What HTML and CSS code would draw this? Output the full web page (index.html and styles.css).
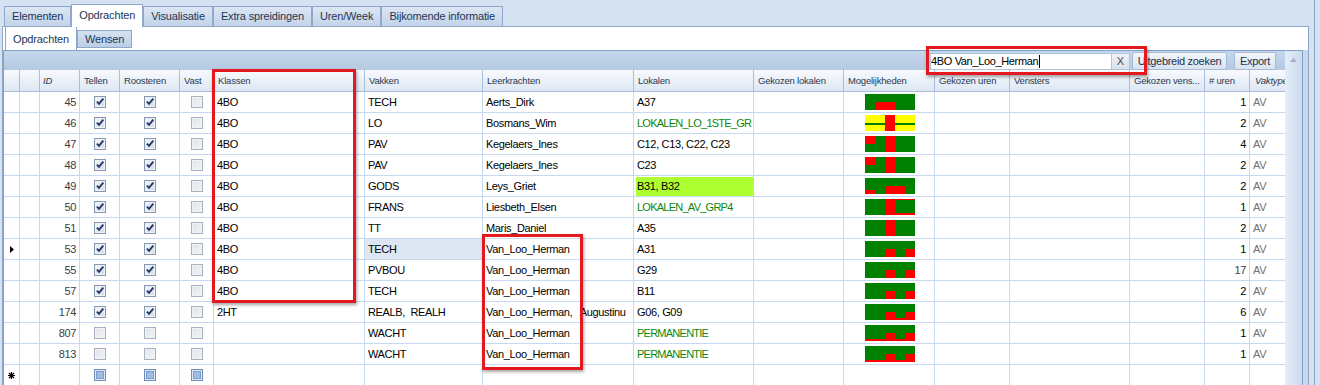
FILE: index.html
```html
<!DOCTYPE html>
<html>
<head>
<meta charset="utf-8">
<link rel="stylesheet" href="styles.css">
</head>
<body>
<svg class="defs" width="0" height="0" aria-hidden="true">
  <defs>
    <linearGradient id="gOn" x1="0" y1="0" x2="1" y2="1">
      <stop offset="0" stop-color="#f7f8fa"/><stop offset="1" stop-color="#d2d8e1"/>
    </linearGradient>
    <linearGradient id="gOff" x1="0" y1="0" x2="1" y2="1">
      <stop offset="0" stop-color="#dfe2e6"/><stop offset="1" stop-color="#f4f5f7"/>
    </linearGradient>
    <symbol id="cbOn" viewBox="0 0 12 12">
      <rect x=".5" y=".5" width="11" height="11" fill="url(#gOn)" stroke="#8798b2"/>
      <rect x="1.5" y="1.5" width="9" height="9" fill="none" stroke="#eef1f5"/>
      <path d="M2.9 5.6L5 7.9L9.3 2.6" fill="none" stroke="#203a6c" stroke-width="1.9"/>
    </symbol>
    <symbol id="cbOff" viewBox="0 0 12 12">
      <rect x=".5" y=".5" width="11" height="11" fill="url(#gOff)" stroke="#a8b1bf"/>
      <rect x="1.5" y="1.5" width="9" height="9" fill="none" stroke="#f1f2f4"/>
    </symbol>
    <symbol id="cbNew" viewBox="0 0 12 12">
      <rect x=".5" y=".5" width="11" height="11" fill="#dfe8f5" stroke="#6f8db9"/>
      <rect x="2.5" y="2.5" width="7" height="7" fill="#9fbce3" stroke="#7c9ccb"/>
    </symbol>
  </defs>
</svg>

<div class="frame">
  <div class="tabs">
    <div class="tab">Elementen</div>
    <div class="tab on">Opdrachten</div>
    <div class="tab">Visualisatie</div>
    <div class="tab">Extra spreidingen</div>
    <div class="tab">Uren/Week</div>
    <div class="tab">Bijkomende informatie</div>
  </div>
  <div class="page">
    <div class="subtabs">
      <div class="subtab on">Opdrachten</div>
      <div class="subtab">Wensen</div>
    </div>
    <div class="grid">
      <div class="main">
        <div class="toolbar">
          <div class="search">4BO Van_Loo_Herman<span class="caret"></span></div>
          <div class="clear">X</div>
          <div class="btn btn-adv">Uitgebreid zoeken</div>
          <div class="btn btn-exp">Export</div>
        </div>

        <div class="row head">
          <div class="c"></div>
          <div class="c"></div>
          <div class="c it">ID</div>
          <div class="c">Tellen</div>
          <div class="c">Roosteren</div>
          <div class="c">Vast</div>
          <div class="c">Klassen</div>
          <div class="c">Vakken</div>
          <div class="c">Leerkrachten</div>
          <div class="c">Lokalen</div>
          <div class="c">Gekozen lokalen</div>
          <div class="c">Mogelijkheden</div>
          <div class="c">Gekozen uren</div>
          <div class="c">Vensters</div>
          <div class="c">Gekozen vens...</div>
          <div class="c"># uren</div>
          <div class="c it vt">Vaktype</div>
        </div>

        <div class="row">
          <div class="c ind"></div><div class="c"></div><div class="c num id">45</div>
          <div class="c ck"><svg class="cb"><use href="#cbOn"/></svg></div>
          <div class="c ck"><svg class="cb"><use href="#cbOn"/></svg></div>
          <div class="c ck"><svg class="cb"><use href="#cbOff"/></svg></div>
          <div class="c">4BO</div><div class="c">TECH</div><div class="c">Aerts_Dirk</div><div class="c">A37</div><div class="c"></div>
          <div class="c bar"><svg width="50" height="16"><rect width="50" height="16" fill="#008000"/><rect x="10" y="8" width="20" height="8" fill="#f00"/></svg></div>
          <div class="c"></div><div class="c"></div><div class="c"></div><div class="c num">1</div><div class="c av">AV</div>
        </div>

        <div class="row">
          <div class="c ind"></div><div class="c"></div><div class="c num id">46</div>
          <div class="c ck"><svg class="cb"><use href="#cbOn"/></svg></div>
          <div class="c ck"><svg class="cb"><use href="#cbOn"/></svg></div>
          <div class="c ck"><svg class="cb"><use href="#cbOff"/></svg></div>
          <div class="c">4BO</div><div class="c">LO</div><div class="c">Bosmans_Wim</div><div class="c grn">LOKALEN_LO_1STE_GR</div><div class="c"></div>
          <div class="c bar"><svg width="50" height="16"><rect width="50" height="16" fill="#ff0"/><rect y="8" width="50" height="2" fill="#008000"/><rect x="20" width="10" height="16" fill="#f00"/></svg></div>
          <div class="c"></div><div class="c"></div><div class="c"></div><div class="c num">2</div><div class="c av">AV</div>
        </div>

        <div class="row">
          <div class="c ind"></div><div class="c"></div><div class="c num id">47</div>
          <div class="c ck"><svg class="cb"><use href="#cbOn"/></svg></div>
          <div class="c ck"><svg class="cb"><use href="#cbOn"/></svg></div>
          <div class="c ck"><svg class="cb"><use href="#cbOff"/></svg></div>
          <div class="c">4BO</div><div class="c">PAV</div><div class="c">Kegelaers_Ines</div><div class="c">C12, C13, C22, C23</div><div class="c"></div>
          <div class="c bar"><svg width="50" height="16"><rect width="50" height="16" fill="#008000"/><rect width="10" height="8" fill="#f00"/><rect x="20" width="10" height="16" fill="#f00"/></svg></div>
          <div class="c"></div><div class="c"></div><div class="c"></div><div class="c num">4</div><div class="c av">AV</div>
        </div>

        <div class="row">
          <div class="c ind"></div><div class="c"></div><div class="c num id">48</div>
          <div class="c ck"><svg class="cb"><use href="#cbOn"/></svg></div>
          <div class="c ck"><svg class="cb"><use href="#cbOn"/></svg></div>
          <div class="c ck"><svg class="cb"><use href="#cbOff"/></svg></div>
          <div class="c">4BO</div><div class="c">PAV</div><div class="c">Kegelaers_Ines</div><div class="c">C23</div><div class="c"></div>
          <div class="c bar"><svg width="50" height="16"><rect width="50" height="16" fill="#008000"/><rect width="10" height="8" fill="#f00"/><rect x="20" width="10" height="16" fill="#f00"/></svg></div>
          <div class="c"></div><div class="c"></div><div class="c"></div><div class="c num">2</div><div class="c av">AV</div>
        </div>

        <div class="row">
          <div class="c ind"></div><div class="c"></div><div class="c num id">49</div>
          <div class="c ck"><svg class="cb"><use href="#cbOn"/></svg></div>
          <div class="c ck"><svg class="cb"><use href="#cbOn"/></svg></div>
          <div class="c ck"><svg class="cb"><use href="#cbOff"/></svg></div>
          <div class="c">4BO</div><div class="c">GODS</div><div class="c">Leys_Griet</div><div class="c hl">B31, B32</div><div class="c"></div>
          <div class="c bar"><svg width="50" height="16"><rect width="50" height="16" fill="#008000"/><rect y="12" width="10" height="4" fill="#f00"/><rect x="20" y="8" width="20" height="8" fill="#f00"/></svg></div>
          <div class="c"></div><div class="c"></div><div class="c"></div><div class="c num">2</div><div class="c av">AV</div>
        </div>

        <div class="row">
          <div class="c ind"></div><div class="c"></div><div class="c num id">50</div>
          <div class="c ck"><svg class="cb"><use href="#cbOn"/></svg></div>
          <div class="c ck"><svg class="cb"><use href="#cbOn"/></svg></div>
          <div class="c ck"><svg class="cb"><use href="#cbOff"/></svg></div>
          <div class="c">4BO</div><div class="c">FRANS</div><div class="c">Liesbeth_Elsen</div><div class="c grn">LOKALEN_AV_GRP4</div><div class="c"></div>
          <div class="c bar"><svg width="50" height="16"><rect width="50" height="16" fill="#008000"/><rect x="20" width="30" height="16" fill="#f00"/><rect x="30" y="1" width="20" height="13" fill="#008000"/></svg></div>
          <div class="c"></div><div class="c"></div><div class="c"></div><div class="c num">1</div><div class="c av">AV</div>
        </div>

        <div class="row">
          <div class="c ind"></div><div class="c"></div><div class="c num id">51</div>
          <div class="c ck"><svg class="cb"><use href="#cbOn"/></svg></div>
          <div class="c ck"><svg class="cb"><use href="#cbOn"/></svg></div>
          <div class="c ck"><svg class="cb"><use href="#cbOff"/></svg></div>
          <div class="c">4BO</div><div class="c">TT</div><div class="c">Maris_Daniel</div><div class="c">A35</div><div class="c"></div>
          <div class="c bar"><svg width="50" height="16"><rect width="50" height="16" fill="#008000"/><rect x="20" width="10" height="16" fill="#f00"/></svg></div>
          <div class="c"></div><div class="c"></div><div class="c"></div><div class="c num">2</div><div class="c av">AV</div>
        </div>

        <div class="row">
          <div class="c ind cur"><svg width="4" height="7"><path d="M0 0L4 3.5L0 7z" fill="#000"/></svg></div><div class="c"></div><div class="c num id">53</div>
          <div class="c ck"><svg class="cb"><use href="#cbOn"/></svg></div>
          <div class="c ck"><svg class="cb"><use href="#cbOn"/></svg></div>
          <div class="c ck"><svg class="cb"><use href="#cbOff"/></svg></div>
          <div class="c">4BO</div><div class="c focus">TECH</div><div class="c">Van_Loo_Herman</div><div class="c">A31</div><div class="c"></div>
          <div class="c bar"><svg width="50" height="16"><rect width="50" height="16" fill="#008000"/><rect x="20" y="8" width="10" height="8" fill="#f00"/><rect x="40" y="8" width="10" height="8" fill="#f00"/></svg></div>
          <div class="c"></div><div class="c"></div><div class="c"></div><div class="c num">1</div><div class="c av">AV</div>
        </div>

        <div class="row">
          <div class="c ind"></div><div class="c"></div><div class="c num id">55</div>
          <div class="c ck"><svg class="cb"><use href="#cbOn"/></svg></div>
          <div class="c ck"><svg class="cb"><use href="#cbOn"/></svg></div>
          <div class="c ck"><svg class="cb"><use href="#cbOff"/></svg></div>
          <div class="c">4BO</div><div class="c">PVBOU</div><div class="c">Van_Loo_Herman</div><div class="c">G29</div><div class="c"></div>
          <div class="c bar"><svg width="50" height="16"><rect width="50" height="16" fill="#008000"/><rect x="20" y="8" width="10" height="8" fill="#f00"/><rect x="40" y="8" width="10" height="8" fill="#f00"/></svg></div>
          <div class="c"></div><div class="c"></div><div class="c"></div><div class="c num id">17</div><div class="c av">AV</div>
        </div>

        <div class="row">
          <div class="c ind"></div><div class="c"></div><div class="c num id">57</div>
          <div class="c ck"><svg class="cb"><use href="#cbOn"/></svg></div>
          <div class="c ck"><svg class="cb"><use href="#cbOn"/></svg></div>
          <div class="c ck"><svg class="cb"><use href="#cbOff"/></svg></div>
          <div class="c">4BO</div><div class="c">TECH</div><div class="c">Van_Loo_Herman</div><div class="c">B11</div><div class="c"></div>
          <div class="c bar"><svg width="50" height="16"><rect width="50" height="16" fill="#008000"/><rect x="20" y="8" width="10" height="8" fill="#f00"/><rect x="40" y="8" width="10" height="8" fill="#f00"/></svg></div>
          <div class="c"></div><div class="c"></div><div class="c"></div><div class="c num">2</div><div class="c av">AV</div>
        </div>

        <div class="row">
          <div class="c ind"></div><div class="c"></div><div class="c num id">174</div>
          <div class="c ck"><svg class="cb"><use href="#cbOn"/></svg></div>
          <div class="c ck"><svg class="cb"><use href="#cbOn"/></svg></div>
          <div class="c ck"><svg class="cb"><use href="#cbOff"/></svg></div>
          <div class="c">2HT</div><div class="c">REALB,&nbsp; REALH</div><div class="c">Van_Loo_Herman,&nbsp;&nbsp; Augustinu</div><div class="c">G06, G09</div><div class="c"></div>
          <div class="c bar"><svg width="50" height="16"><rect width="50" height="16" fill="#008000"/><rect x="20" y="8" width="10" height="8" fill="#f00"/><rect x="30" y="14" width="10" height="2" fill="#f00"/><rect x="40" y="8" width="10" height="8" fill="#f00"/></svg></div>
          <div class="c"></div><div class="c"></div><div class="c"></div><div class="c num">6</div><div class="c av">AV</div>
        </div>

        <div class="row">
          <div class="c ind"></div><div class="c"></div><div class="c num id">807</div>
          <div class="c ck"><svg class="cb"><use href="#cbOff"/></svg></div>
          <div class="c ck"><svg class="cb"><use href="#cbOff"/></svg></div>
          <div class="c ck"><svg class="cb"><use href="#cbOff"/></svg></div>
          <div class="c"></div><div class="c">WACHT</div><div class="c">Van_Loo_Herman</div><div class="c grn">PERMANENTIE</div><div class="c"></div>
          <div class="c bar"><svg width="50" height="16"><rect width="50" height="16" fill="#008000"/><rect y="14" width="20" height="2" fill="#f00"/><rect x="20" y="8" width="10" height="8" fill="#f00"/><rect x="30" y="14" width="10" height="2" fill="#f00"/><rect x="40" y="8" width="10" height="8" fill="#f00"/></svg></div>
          <div class="c"></div><div class="c"></div><div class="c"></div><div class="c num">1</div><div class="c av">AV</div>
        </div>

        <div class="row">
          <div class="c ind"></div><div class="c"></div><div class="c num id">813</div>
          <div class="c ck"><svg class="cb"><use href="#cbOff"/></svg></div>
          <div class="c ck"><svg class="cb"><use href="#cbOff"/></svg></div>
          <div class="c ck"><svg class="cb"><use href="#cbOff"/></svg></div>
          <div class="c"></div><div class="c">WACHT</div><div class="c">Van_Loo_Herman</div><div class="c grn">PERMANENTIE</div><div class="c"></div>
          <div class="c bar"><svg width="50" height="16"><rect width="50" height="16" fill="#008000"/><rect y="14" width="20" height="2" fill="#f00"/><rect x="20" y="8" width="10" height="8" fill="#f00"/><rect x="30" y="14" width="10" height="2" fill="#f00"/><rect x="40" y="8" width="10" height="8" fill="#f00"/></svg></div>
          <div class="c"></div><div class="c"></div><div class="c"></div><div class="c num">1</div><div class="c av">AV</div>
        </div>

        <div class="row">
          <div class="c ind newrow"><svg width="7" height="7"><path d="M3.5 0V7M0 3.5H7M1 1L6 6M6 1L1 6" stroke="#000" stroke-width="1.2"/></svg></div><div class="c"></div><div class="c"></div>
          <div class="c ck"><svg class="cb"><use href="#cbNew"/></svg></div>
          <div class="c ck"><svg class="cb"><use href="#cbNew"/></svg></div>
          <div class="c ck"><svg class="cb"><use href="#cbNew"/></svg></div>
          <div class="c"></div><div class="c"></div><div class="c"></div><div class="c"></div><div class="c"></div>
          <div class="c"></div><div class="c"></div><div class="c"></div><div class="c"></div><div class="c"></div><div class="c"></div>
        </div>
      </div>
      <div class="vscroll"><svg class="up" width="7" height="4"><path d="M0 4L3.5 0L7 4z" fill="#a3b0c2"/></svg></div>
    </div>
  </div>
</div>

<div class="mark m-klassen"></div>
<div class="mark m-leer"></div>
<div class="mark m-search"></div>
</body>
</html>
```

FILE: styles.css
```css
* { box-sizing: border-box; }
html, body { margin: 0; padding: 0; }
body {
  width: 1320px;
  height: 385px;
  overflow: hidden;
  position: relative;
  background: #d5e2f1;
  font-family: "Liberation Sans", Arial, sans-serif;
  font-size: 11px;
  color: #000;
}
.defs { display: block; width: 0; height: 0; }

.frame {
  width: 1315px;
  height: 385px;
  border-right: 1px solid #8ea6c7;
}

/* top tabs */
.tabs {
  display: flex;
  align-items: flex-end;
  height: 26px;
  padding-left: 4px;
}
.tab {
  height: 20px;
  padding: 0 7px;
  line-height: 19px;
  border: 1px solid #8fa8ca;
  border-bottom: 0;
  background: linear-gradient(#dce6f3, #c3d3e8);
  color: #1e3656;
  letter-spacing: -0.15px;
  white-space: nowrap;
}
.tab.on {
  height: 23px;
  margin-bottom: -1px;
  line-height: 21px;
  background: #fff;
  position: relative;
  z-index: 1;
}

/* tab page */
.page {
  margin-left: 2px;
  width: 1307px;
  height: 359px;
  background: #fff;
  border: 1px solid #8fa8ca;
  border-bottom: 0;
}
.subtabs {
  display: flex;
  align-items: flex-end;
  height: 23px;
  padding-left: 2px;
}
.subtab {
  height: 18px;
  margin-bottom: 2px;
  padding: 0 7px;
  line-height: 16px;
  border: 1px solid #8fa8ca;
  background: linear-gradient(#d6e2f1, #bccee5);
  color: #1e3656;
  letter-spacing: -0.15px;
  white-space: nowrap;
}
.subtab.on {
  height: 23px;
  margin-bottom: 0;
  border-top: 0;
  border-bottom: 0;
  padding-top: 1px;
  line-height: 22px;
  background: #fff;
}

/* grid */
.grid {
  display: flex;
  width: 1300px;
  height: 340px;
  border: 1px solid #809ec7;
  box-shadow: 5px 0 0 #c8d7eb;
}
.main {
  width: 1281px;
  flex: none;
  overflow: hidden;
}
.toolbar {
  display: flex;
  justify-content: flex-end;
  align-items: flex-start;
  height: 19px;
  padding: 1px 9px 0 0;
  background: linear-gradient(#c5d7ec, #b5c9e2);
}
.search {
  width: 182px;
  height: 17px;
  margin-top: 1px;
  border: 1px solid #b4c5db;
  background: #fff;
  line-height: 15px;
  letter-spacing: -0.35px;
  white-space: nowrap;
  overflow: hidden;
}
.caret {
  display: inline-block;
  width: 1px;
  height: 13px;
  margin-left: 1px;
  background: #000;
  vertical-align: -3px;
}
.clear {
  width: 18px;
  height: 17px;
  margin-top: 1px;
  border: 1px solid #b4c5db;
  border-left: 0;
  background: linear-gradient(#eef2f7, #d8e0eb);
  color: #4b4b4b;
  text-align: center;
  line-height: 15px;
}
.btn {
  height: 18px;
  border: 1px solid #a7bbd6;
  border-radius: 2px;
  background: linear-gradient(#f4f7fb, #d8e3f0);
  color: #1f324c;
  text-align: center;
  line-height: 16px;
  letter-spacing: -0.3px;
  white-space: nowrap;
}
.btn-adv { width: 95px; margin-left: 2px; }
.btn-exp { width: 42px; margin-left: 7px; }

.row {
  display: grid;
  grid-template-columns: 16px 20px 40px 40px 60px 34px 151px 118px 151px 120px 90px 91px 75px 120px 75px 45px 60px;
  height: 21px;
}
.c {
  border-right: 1px solid #c6d9f1;
  border-bottom: 1px solid #c6d9f1;
  padding: 1px 3px 0;
  line-height: 19px;
  white-space: nowrap;
  overflow: hidden;
  letter-spacing: -0.35px;
}
.head {
  height: 22px;
  background: linear-gradient(#f8fafd, #dce6f3);
}
.head .c {
  border-right-color: #a8bedb;
  border-bottom-color: #a8bedb;
  padding: 0 4px;
  font-size: 9.5px;
  line-height: 21px;
  letter-spacing: -0.2px;
  color: #283a52;
}
.head .c.it { font-style: italic; padding-left: 3px; }
.head .c.vt { padding-left: 5px; }

.num { text-align: right; }
.id { color: #3d3d3d; }
.av { color: #707070; }
.grn { color: #0b880b; letter-spacing: -0.75px; }
.focus { background: #dde7f3; }
.hl { background: #adff2f; box-shadow: inset 2px 1px 0 #fff; }

.ck {
  display: flex;
  justify-content: center;
  align-items: center;
  padding: 0;
}
.cb { display: block; width: 12px; height: 12px; }

.bar { padding: 2px 0 0 21px; }
.bar svg { display: block; shape-rendering: crispEdges; }

.ind { display: flex; align-items: center; padding: 0; }
.ind svg { display: block; }
.ind.cur { padding-left: 6px; }
.ind.newrow { padding-left: 4px; }

.vscroll {
  width: 17px;
  flex: none;
  padding-top: 7px;
  background: linear-gradient(90deg, #e5edf8, #cbdaed);
}
.up { display: block; margin: 0 auto; }

/* red annotation frames */
.mark {
  position: absolute;
  border: 3px solid #e4191f;
  box-shadow: 1px 2px 3px rgba(0, 0, 0, 0.35);
  pointer-events: none;
}
.m-klassen { left: 212px; top: 69px; width: 144px; height: 234px; }
.m-leer { left: 482px; top: 234px; width: 101px; height: 136px; }
.m-search { left: 926px; top: 46px; width: 221px; height: 29px; }
```
